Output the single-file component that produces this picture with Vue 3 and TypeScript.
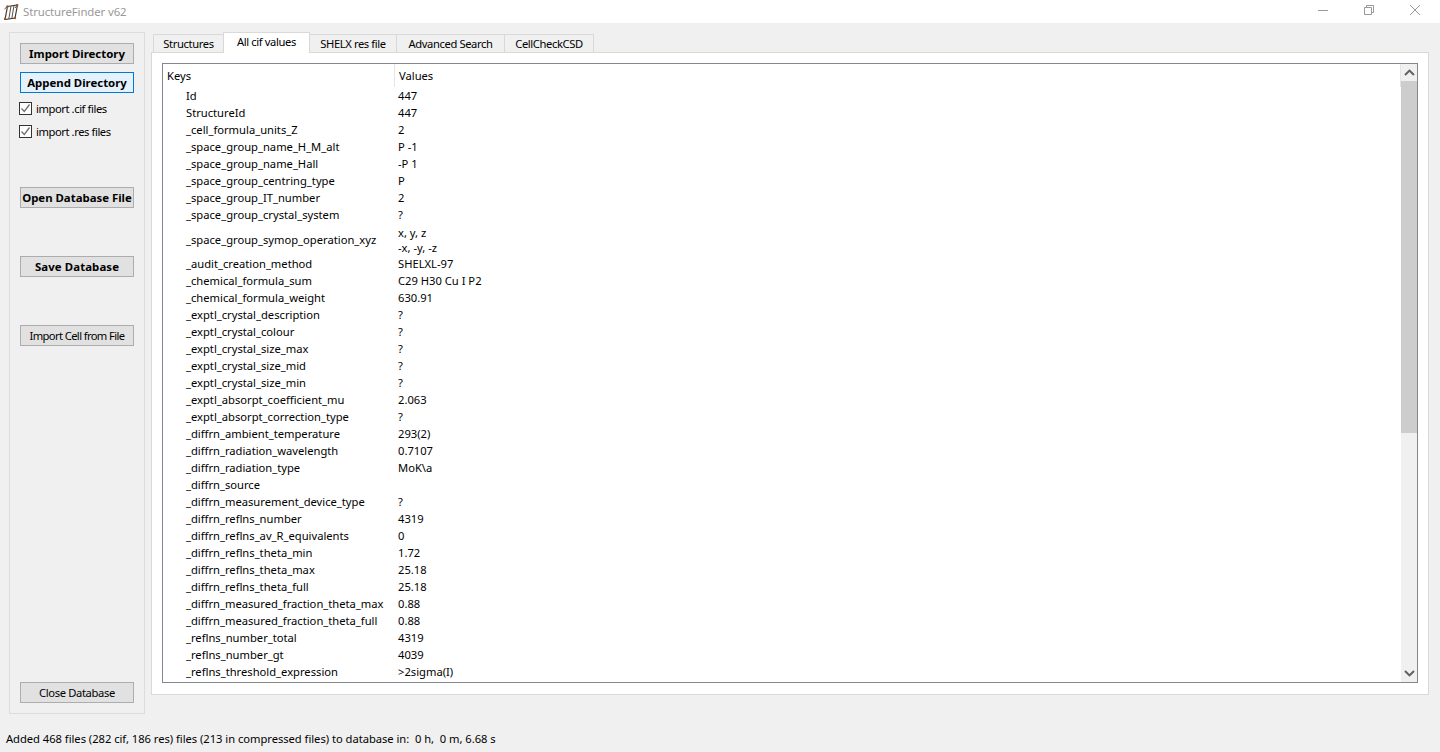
<script setup lang="ts">
interface Row { k: string; v: string[] }
const raw: [string, string][] = [
  ['Id', '447'], ['StructureId', '447'], ['_cell_formula_units_Z', '2'],
  ['_space_group_name_H_M_alt', 'P -1'], ['_space_group_name_Hall', '-P 1'],
  ['_space_group_centring_type', 'P'], ['_space_group_IT_number', '2'],
  ['_space_group_crystal_system', '?'], ['_space_group_symop_operation_xyz', 'x, y, z|-x, -y, -z'],
  ['_audit_creation_method', 'SHELXL-97'], ['_chemical_formula_sum', 'C29 H30 Cu I P2'],
  ['_chemical_formula_weight', '630.91'], ['_exptl_crystal_description', '?'],
  ['_exptl_crystal_colour', '?'], ['_exptl_crystal_size_max', '?'], ['_exptl_crystal_size_mid', '?'],
  ['_exptl_crystal_size_min', '?'], ['_exptl_absorpt_coefficient_mu', '2.063'],
  ['_exptl_absorpt_correction_type', '?'], ['_diffrn_ambient_temperature', '293(2)'],
  ['_diffrn_radiation_wavelength', '0.7107'], ['_diffrn_radiation_type', 'MoK\\a'],
  ['_diffrn_source', ''], ['_diffrn_measurement_device_type', '?'], ['_diffrn_reflns_number', '4319'],
  ['_diffrn_reflns_av_R_equivalents', '0'], ['_diffrn_reflns_theta_min', '1.72'],
  ['_diffrn_reflns_theta_max', '25.18'], ['_diffrn_reflns_theta_full', '25.18'],
  ['_diffrn_measured_fraction_theta_max', '0.88'], ['_diffrn_measured_fraction_theta_full', '0.88'],
  ['_reflns_number_total', '4319'], ['_reflns_number_gt', '4039'], ['_reflns_threshold_expression', '>2sigma(I)'],
]
const rows: Row[] = raw.map(([k, v]) => ({ k, v: v.split('|') }))
const tabs = ['Structures', 'All cif values', 'SHELX res file', 'Advanced Search', 'CellCheckCSD']
</script>

<template>
  <div class="win">
    <header class="title">
      <svg class="logo" width="17" height="17" viewBox="0 0 17 17" fill="none">
        <path d="M5.5 3.5 15.5 2 13 15 3 16.5Z" stroke="#3f3a36" stroke-width="1.2"/>
        <path d="M2.5 6 5.5 3.5M13 5 15.5 2M9 3 6.8 16M12 2.5 9.8 15.5" stroke="#55504a" stroke-width="1"/>
        <circle cx="5.5" cy="3.5" r="1.2" fill="#9a5a30"/><circle cx="15" cy="2.2" r="1.2" fill="#9a5a30"/>
        <circle cx="3" cy="16" r="1.2" fill="#9a5a30"/><circle cx="13" cy="15" r="1.2" fill="#9a5a30"/>
      </svg>
      <span class="title-text">StructureFinder v62</span>
      <div class="controls">
        <svg width="10" height="10" viewBox="0 0 10 10"><path d="M0 5.5H10" stroke="#999"/></svg>
        <svg width="10" height="10" viewBox="0 0 10 10" fill="none"><path d="M.5 2.5H7.5V9.5H.5ZM2.5 2.5V.5H9.5V7.5H7.5" stroke="#999"/></svg>
        <svg width="10" height="10" viewBox="0 0 10 10" fill="none"><path d="M0 0 10 10M10 0 0 10" stroke="#999"/></svg>
      </div>
    </header>

    <main class="main">
      <aside class="side">
        <button class="btn bold">Import Directory</button>
        <button class="btn bold focus">Append Directory</button>
        <label class="chk"><span class="box"><svg width="11" height="11" viewBox="0 0 11 11" fill="none"><path d="M1.5 5.5 4.3 8.5 9.5 1.5" stroke="#707070" stroke-width="1.3"/></svg></span><span class="lbl">import .cif files</span></label>
        <label class="chk second"><span class="box"><svg width="11" height="11" viewBox="0 0 11 11" fill="none"><path d="M1.5 5.5 4.3 8.5 9.5 1.5" stroke="#707070" stroke-width="1.3"/></svg></span><span class="lbl">import .res files</span></label>
        <button class="btn bold open">Open Database File</button>
        <button class="btn bold gap48 save">Save Database</button>
        <button class="btn gap48 cell">Import Cell from File</button>
        <button class="btn close">Close Database</button>
      </aside>

      <section class="right">
        <nav class="tabs">
          <div v-for="(t, i) in tabs" :key="t" class="tab" :class="['t' + i, { active: i === 1 }]">{{ t }}</div>
        </nav>
        <div class="pane">
          <div class="table">
            <div class="content">
              <div class="head">
                <div class="hk">Keys</div>
                <div class="hv">Values</div>
              </div>
              <div class="body">
                <div v-for="r in rows" :key="r.k" class="row" :class="{ multi: r.v.length > 1 }">
                  <div class="k">{{ r.k }}</div>
                  <div class="v"><div v-for="l in r.v" :key="l" class="line">{{ l }}</div></div>
                </div>
              </div>
            </div>
            <div class="scroll">
              <div class="arrow">
                <svg width="11" height="7" viewBox="0 0 11 7" fill="none"><path d="M1 6 5.5 1.6 10 6" stroke="#606060" stroke-width="2"/></svg>
              </div>
              <div class="thumb"></div>
              <div class="track"></div>
              <div class="arrow">
                <svg width="11" height="7" viewBox="0 0 11 7" fill="none"><path d="M1 1 5.5 5.4 10 1" stroke="#606060" stroke-width="2"/></svg>
              </div>
            </div>
          </div>
        </div>
      </section>
    </main>

    <footer class="status">Added 468 files (282 cif, 186 res) files (213 in compressed files) to database in:&nbsp; 0 h,&nbsp; 0 m, 6.68 s</footer>
  </div>
</template>

<style>
html, body { margin: 0; overflow: hidden; }
</style>

<style scoped>
.win {
  width: 1440px; height: 752px; display: flex; flex-direction: column; background: #f0f0f0;
  font: 11.2px/16px "Noto Sans", "Open Sans", sans-serif; color: #000;
}
.title { height: 23px; background: #fff; display: flex; align-items: center; flex: none; }
.logo { margin-left: 2px; margin-right: 4px; }
.title-text { color: #999; font-size: 11.4px; letter-spacing: -0.1px; }
.controls { margin-left: auto; display: flex; gap: 36px; padding-right: 20px; margin-top: -3px; }
.main { display: flex; padding: 9px 0 0 9px; flex: none; }
.side {
  width: 136px; height: 682px; box-sizing: border-box; border: 1px solid #dcdcdc;
  padding: 10px; display: flex; flex-direction: column;
}
.btn {
  width: 114px; height: 21px; flex: none; box-sizing: border-box; padding: 0; margin: 0;
  background: #e1e1e1; border: 1px solid #adadad; font: inherit; color: #000; white-space: nowrap;
}
.bold { font-weight: 700; font-size: 11.4px; }
.focus { background: #e5f1fb; border-color: #0078d7; margin-top: 8px; }
.chk { display: flex; align-items: center; gap: 4px; height: 13px; margin-top: 9px; margin-left: -1px; white-space: nowrap; }
.chk.second { margin-top: 10px; }
.lbl { letter-spacing: -0.42px; }
.box {
  width: 13px; height: 13px; box-sizing: border-box; border: 1px solid #333; background: #fff;
  display: flex; align-items: center; justify-content: center; flex: none;
}
.open { margin-top: 49px; }
.gap48 { margin-top: 48px; }
.save { letter-spacing: 0.1px; }
.cell { letter-spacing: -0.62px; }
.close { margin-top: auto; letter-spacing: -0.36px; }
.right { margin-left: 6px; width: 1278px; display: flex; flex-direction: column; }
.tabs { display: flex; height: 20px; padding-left: 2px; align-items: flex-end; position: relative; z-index: 1; flex: none; }
.tab {
  height: 18px; box-sizing: border-box; border: 1px solid #d9d9d9; border-bottom: 0; margin-left: -1px;
  background: #f0f0f0; display: flex; align-items: center; justify-content: center; letter-spacing: -0.38px;
}
.tab.active { height: 21px; background: #fff; margin-bottom: -1px; padding-bottom: 3px; }
.t0 { width: 71px; margin-left: 0; } .t1 { width: 87px; } .t2 { width: 88px; } .t3 { width: 109px; } .t4 { width: 90px; }
.pane {
  height: 643px; box-sizing: border-box; border: 1px solid #d9d9d9; background: #fff; padding: 10px 10px 11px;
}
.table { height: 620px; box-sizing: border-box; border: 1px solid #828790; display: flex; background: #fff; }
.content { flex: 1; min-width: 0; overflow: hidden; }
.head { display: flex; height: 23px; align-items: center; }
.hk { width: 232px; height: 100%; box-sizing: border-box; padding: 0 0 0 4px; border-right: 1px solid #e5e5e5; display: flex; align-items: center; }
.hv { flex: 1; height: 100%; box-sizing: border-box; padding-left: 4px; border-right: 1px solid #e5e5e5; display: flex; align-items: center; }
.body { overflow: hidden; }
.row { display: flex; align-items: center; min-height: 17px; }
.row.multi { height: 32px; }
.row.multi .k, .row.multi .v { margin-top: 1px; }
.k { width: 212px; margin-left: 23px; box-sizing: border-box; white-space: nowrap; }
.line { height: 15px; line-height: 15px; white-space: pre; }
.row .line:only-child { height: 17px; line-height: 17px; }
.scroll { width: 16px; flex: none; display: flex; flex-direction: column; background: #f0f0f0; }
.arrow { height: 17px; display: flex; align-items: center; justify-content: center; flex: none; }
.thumb { height: 352px; background: #cdcdcd; flex: none; }
.track { flex: 1; }
.status { margin-top: 15px; padding-left: 6px; line-height: 20px; white-space: nowrap; letter-spacing: -0.03px; }
</style>
